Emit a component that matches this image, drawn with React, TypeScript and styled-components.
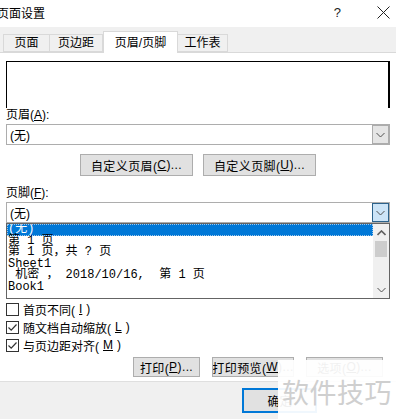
import styled, { createGlobalStyle } from 'styled-components';

const Global = createGlobalStyle`
  html, body {
    margin: 0;
    padding: 0;
    background: #ffffff;
  }
  body {
    font-family: "Liberation Sans", "Noto Sans CJK SC", sans-serif;
    font-size: 12px;
    color: #000;
  }
`;

type Tab = { label: string; active?: boolean; width: number };

const tabs: Tab[] = [
  { label: '页面', width: 47 },
  { label: '页边距', width: 53 },
  { label: '页眉/页脚', width: 75, active: true },
  { label: '工作表', width: 50 },
];

type Item = { text: string; mono?: boolean };

const footerItems: Item[] = [
  { text: '(无)' },
  { text: '第 1 页' },
  { text: '第 1 页，共 ? 页' },
  { text: 'Sheet1', mono: true },
  { text: ' 机密 ， 2018/10/16,  第 1 页' },
  { text: 'Book1', mono: true },
];

function Chevron({ up }: { up?: boolean }) {
  return (
    <svg width="9" height="6" viewBox="0 0 9 6">
      <polyline
        points={up ? '0.5,5 4.5,1 8.5,5' : '0.5,1 4.5,5 8.5,1'}
        fill="none"
        stroke={up ? '#606060' : '#505050'}
        strokeWidth={up ? 1.6 : 1}
      />
    </svg>
  );
}

function Check() {
  return (
    <svg width="11" height="11" viewBox="0 0 11 11">
      <polyline points="1.5,5.5 4.2,8.2 9.5,2.5" fill="none" stroke="#333" strokeWidth="1.2" />
    </svg>
  );
}

export default function App() {
  return (
    <>
      <Global />
      <Window>
        <TitleBar>
          <Title>页面设置</Title>
          <TitleButtons>
            <Help>?</Help>
            <svg width="13" height="13" viewBox="0 0 13 13">
              <path d="M0.5 0.5 L12.5 12.5 M12.5 0.5 L0.5 12.5" stroke="#222" strokeWidth="1" />
            </svg>
          </TitleButtons>
        </TitleBar>

        <TabStrip>
          {tabs.map(t => (
            <TabItem key={t.label} $active={t.active} style={{ width: t.width }}>
              {t.label}
            </TabItem>
          ))}
        </TabStrip>

        <Content>
          <Preview />

          <Label>
            页眉(<u>A</u>):
          </Label>
          <Select>
            <SelectText>(无)</SelectText>
            <DropButton>
              <Chevron />
            </DropButton>
          </Select>

          <ButtonRow>
            <Button $w={113}>
              自定义页眉(<u>C</u>)...
            </Button>
            <Button $w={113}>
              自定义页脚(<u>U</u>)...
            </Button>
          </ButtonRow>

          <Label $top={10}>
            页脚(<u>F</u>):
          </Label>
          <Select $focused>
            <SelectText>(无)</SelectText>
            <DropButton $focused>
              <Chevron />
            </DropButton>
          </Select>

          <ListBox>
            <ListItems>
              {footerItems.map((it, i) => (
                <ListRow key={i} $selected={i === 0} $mono={it.mono}>
                  {it.text}
                </ListRow>
              ))}
            </ListItems>
            <ScrollBar>
              <ScrollArrow>
                <Chevron up />
              </ScrollArrow>
              <Thumb />
              <ScrollTrack />
              <ScrollArrow>
                <Chevron />
              </ScrollArrow>
            </ScrollBar>
          </ListBox>

          <CheckList>
            <CheckRow>
              <Box />
              首页不同(<u>I</u>)
            </CheckRow>
            <CheckRow>
              <Box>
                <Check />
              </Box>
              随文档自动缩放(<u>L</u>)
            </CheckRow>
            <CheckRow>
              <Box>
                <Check />
              </Box>
              与页边距对齐(<u>M</u>)
            </CheckRow>
          </CheckList>

          <PrintRow>
            <Button $w={67} $h={20}>
              打印(<u>P</u>)...
            </Button>
            <Button $w={82} $h={20}>
              打印预览(<u>W</u>)...
            </Button>
            <Button $w={77} $h={20}>
              选项(<u>O</u>)...
            </Button>
          </PrintRow>
        </Content>

        <Footer>
          <OkButton>确定</OkButton>
        </Footer>

        <Watermark>软件技巧</Watermark>
      </Window>
    </>
  );
}

const Window = styled.div`
  position: relative;
  width: 396px;
  height: 419px;
  overflow: hidden;
  display: flex;
  flex-direction: column;
  background: #fff;
`;

const TitleBar = styled.div`
  height: 27px;
  display: flex;
  align-items: center;
  justify-content: space-between;
  background: #fff;
`;

const Title = styled.div`
  margin-left: -3px;
  font-size: 12px;
  margin-top: -2px;
`;

const TitleButtons = styled.div`
  display: flex;
  align-items: center;
  gap: 36px;
  margin-right: 6px;
  margin-top: -2px;
`;

const Help = styled.span`
  font-size: 13px;
  color: #222;
`;

const TabStrip = styled.div`
  height: 25px;
  background: #f0f0f0;
  display: flex;
  align-items: flex-end;
  padding-left: 3px;
  border-bottom: 1px solid #d9d9d9;
`;

const TabItem = styled.div<{ $active?: boolean }>`
  box-sizing: border-box;
  height: ${p => (p.$active ? 22 : 18)}px;
  margin-bottom: ${p => (p.$active ? -1 : 0)}px;
  background: ${p => (p.$active ? '#fff' : '#f0f0f0')};
  border: 1px solid #d9d9d9;
  border-bottom: ${p => (p.$active ? 'none' : '1px solid #d9d9d9')};
  border-left-width: ${p => (p.$active ? 1 : 0)}px;
  display: flex;
  align-items: center;
  justify-content: center;
  font-size: 12px;
  line-height: 1;
  &:first-child {
    border-left-width: 1px;
  }
`;

const Content = styled.div`
  flex: 1;
  background: #fff;
  padding: 0 6px;
  display: flex;
  flex-direction: column;
`;

const Preview = styled.div`
  margin-top: 8px;
  height: 46px;
  border: 1px solid #000;
  border-right-width: 2px;
  border-bottom: none;
`;

const Label = styled.div<{ $top?: number }>`
  margin-top: ${p => p.$top ?? 0}px;
  height: 15px;
  line-height: 15px;
  font-size: 12px;
`;

const Select = styled.div<{ $focused?: boolean }>`
  box-sizing: border-box;
  margin-top: 1px;
  height: 21px;
  border: 1px solid #adadad;
  display: flex;
  align-items: center;
  justify-content: space-between;
  background: #fff;
`;

const SelectText = styled.span`
  padding-left: 3px;
  font-size: 12px;
`;

const DropButton = styled.div<{ $focused?: boolean }>`
  box-sizing: border-box;
  width: 17px;
  height: 19px;
  display: flex;
  align-items: center;
  justify-content: center;
  background: ${p => (p.$focused ? '#cce4f7' : '#e5e5e5')};
  border: 1px solid ${p => (p.$focused ? '#2c628b' : '#acacac')};
`;

const ButtonRow = styled.div`
  margin-top: 9px;
  margin-left: 74px;
  display: flex;
  gap: 10px;
`;

const Button = styled.div<{ $w: number; $h?: number }>`
  box-sizing: border-box;
  width: ${p => p.$w}px;
  height: ${p => p.$h ?? 22}px;
  background: #e1e1e1;
  border: 1px solid #adadad;
  display: flex;
  align-items: center;
  justify-content: center;
  font-size: 12px;
  white-space: nowrap;
  overflow: hidden;
  letter-spacing: 0.4px;
`;

const ListBox = styled.div`
  box-sizing: border-box;
  height: 76px;
  border: 1px solid #646464;
  display: flex;
  overflow: hidden;
`;

const ListItems = styled.div`
  flex: 1;
  overflow: hidden;
`;

const ListRow = styled.div<{ $selected?: boolean; $mono?: boolean }>`
  height: 11.5px;
  line-height: 11px;
  padding-left: 1px;
  white-space: pre;
  font-family: "Liberation Mono", "Noto Sans CJK SC", monospace;
  font-size: 12px;
  color: ${p => (p.$selected ? '#fff' : '#000')};
  background: ${p => (p.$selected ? '#0078d7' : 'transparent')};
  outline: ${p => (p.$selected ? '1px dotted #9fc7ea' : 'none')};
  outline-offset: -1px;
`;

const ScrollBar = styled.div`
  width: 16px;
  background: #f0f0f0;
  display: flex;
  flex-direction: column;
  align-items: center;
`;

const ScrollArrow = styled.div`
  height: 17px;
  width: 16px;
  display: flex;
  align-items: center;
  justify-content: center;
`;

const Thumb = styled.div`
  width: 12px;
  height: 16px;
  background: #cdcdcd;
`;

const ScrollTrack = styled.div`
  flex: 1;
`;

const CheckList = styled.div`
  margin-top: 1px;
  display: flex;
  flex-direction: column;
`;

const CheckRow = styled.div`
  height: 18px;
  display: flex;
  align-items: center;
  gap: 4px;
  font-size: 12px;
`;

const Box = styled.div`
  box-sizing: border-box;
  width: 13px;
  height: 13px;
  border: 1px solid #333;
  background: #fff;
  display: flex;
  align-items: center;
  justify-content: center;
`;

const PrintRow = styled.div`
  margin-top: 3px;
  margin-left: 127px;
  display: flex;
  gap: 12px;
`;

const Footer = styled.div`
  height: 38px;
  background: #f0f0f0;
  border-top: 1px solid #dfdfdf;
  display: flex;
  align-items: flex-start;
  padding-left: 242px;
  padding-top: 6px;
  box-sizing: border-box;
`;

const OkButton = styled.div`
  box-sizing: border-box;
  width: 75px;
  height: 25px;
  background: #e1e1e1;
  border: 2px solid #0078d7;
  display: flex;
  align-items: center;
  justify-content: center;
  font-size: 12px;
`;

const Watermark = styled.div`
  position: absolute;
  left: 278px;
  top: 360px;
  width: 118px;
  height: 59px;
  background: rgba(255, 255, 255, 0.94);
  color: #cfcfcf;
  font-family: "Noto Sans CJK SC", sans-serif;
  font-size: 27px;
  line-height: 1;
  padding: 18px 0 0 4px;
  box-sizing: border-box;
  white-space: nowrap;
  letter-spacing: 0.5px;
`;
